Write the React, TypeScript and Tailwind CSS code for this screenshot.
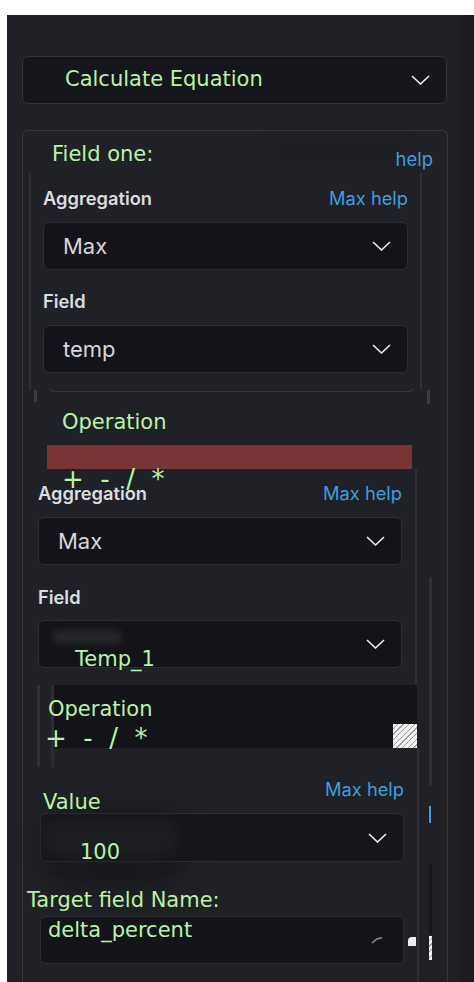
import React from "react";

const green = "text-[#b8f3a6]";
const dv = "font-['DejaVu_Sans',sans-serif]";
const inter = "font-['Inter',sans-serif]";

function Chevron({ small = false }: { small?: boolean }) {
  return small ? (
    <svg width="12" height="7" viewBox="0 0 12 7" className="opacity-60">
      <polyline points="1,6 6,2 11,0.5" fill="none" stroke="#e5e5e5" strokeWidth="1.4" />
    </svg>
  ) : (
    <svg width="19" height="10" viewBox="0 0 19 10">
      <polyline points="1,1 9.5,9 18,1" fill="none" stroke="#eeeeee" strokeWidth="1.6" />
    </svg>
  );
}

function Select({ text, className = "" }: { text?: string; className?: string }) {
  return (
    <div
      className={`flex h-[48px] items-center justify-between rounded-[6px] border border-[#2c2e34] bg-[#13141a] pl-[19px] pr-[16px] ${className}`}
    >
      <span className={`${inter} text-[22px] text-[#d6d7da]`}>{text}</span>
      <Chevron />
    </div>
  );
}

function LabelRow({ label, help = true }: { label: string; help?: boolean }) {
  return (
    <div className={`flex h-[20px] items-center justify-between ${inter}`}>
      <span className="text-[18.3px] font-semibold text-[#dcdde0]">{label}</span>
      {help && <span className="text-[18.3px] text-[#3d9fdc]">Max help</span>}
    </div>
  );
}

function Hatch({ className = "" }: { className?: string }) {
  return (
    <div
      className={`bg-[repeating-linear-gradient(135deg,#f2f2f2_0px,#f2f2f2_3px,#9c9c9c_3px,#9c9c9c_4px)] ${className}`}
    />
  );
}

function Ops({ className = "" }: { className?: string }) {
  return (
    <div className={`${dv} ${green} absolute whitespace-pre text-[26px] leading-[26px] ${className}`}>
      {"+  -  /  *"}
    </div>
  );
}

export default function App() {
  return (
    <div className="h-[982px] w-[474px] overflow-hidden bg-white pl-[7px] pt-[15px]">
      <div className="relative flex h-[967px] w-[467px] bg-[#202126]">
        <div className="w-[453px] pt-[41px]">
          {/* main dropdown */}
          <div className="ml-[15px] flex h-[48px] w-[425px] items-center justify-between rounded-[6px] border border-[#32343a] bg-[#15161b] pl-[42px] pr-[16px]">
            <span className={`${dv} ${green} text-[21px]`}>Calculate Equation</span>
            <Chevron />
          </div>

          {/* outer box */}
          <div className="relative ml-[15px] mt-[26px] h-[852px] w-[426px] rounded-t-[6px] border border-b-0 border-[#34363c]">
            {/* header */}
            <div className="relative flex h-[42px] items-center justify-between pl-[29px] pr-[14px]">
              <span className={`${dv} ${green} mt-[5px] text-[21px]`}>Field one:</span>
              <div className="absolute left-[250px] top-[12px] h-[18px] w-[130px] rounded-full bg-[#1c1d22] blur-[8px]" />
              <span className={`${inter} relative mt-[16px] text-[18.5px] text-[#3d9fdc]`}>help</span>
            </div>

            {/* first group */}
            <div className="relative ml-[6px] h-[217px] w-[393px] border-x-2 border-[#2e3036] pl-[12px] pr-[12px] pt-[16px]">
              <LabelRow label="Aggregation" />
              <Select text="Max" className="mt-[13px]" />
              <div className="mt-[22px]">
                <LabelRow label="Field" help={false} />
              </div>
              <Select text="temp" className="mt-[13px]" />
            </div>
            <div className="relative flex h-[12px] items-start">
              <div className="ml-[11px] h-[12px] w-[3px] bg-[#3a3c42]" />
              <div className="-mt-[2px] ml-[13px] h-[4px] w-[363px] rounded-b-[6px] border-x border-b border-[#34363c]" />
              <div className="ml-[14px] h-[14px] w-[3px] bg-[#3a3c42]" />
            </div>

            {/* operation */}
            <div className={`${dv} ${green} ml-[39px] mt-[8px] text-[21px] leading-[24px]`}>Operation</div>
            <div className="ml-[24px] mt-[11px] h-[24px] w-[365px] bg-[#7b3435]" />

            {/* second group */}
            <div className="relative ml-[2px] h-[216px] w-[392px] border-r-2 border-[#2e3036] pl-[13px] pr-[13px] pt-[15px]">
              <LabelRow label="Aggregation" />
              <Select text="Max" className="mt-[13px]" />
              <div className="mt-[23px]">
                <LabelRow label="Field" help={false} />
              </div>
              <div className="relative mt-[12px]">
                <Select text="" />
                <div className="absolute left-[14px] top-[10px] h-[14px] w-[70px] rounded-full bg-[#25272c] blur-[3px]" />
                <span className={`${dv} ${green} absolute left-[37px] top-[27px] text-[21px] leading-[24px]`}>Temp_1</span>
              </div>
              <Ops className="left-[37px] top-[-3px]" />
            </div>

            {/* dark operation block */}
            <div className="relative flex h-[63px]">
              <div className="ml-[14px] h-[82px] w-[3px] bg-[#2e3036]" />
              <div className="ml-[11px] h-[82px] w-[3px] bg-[#2a2c31]" />
              <div className="relative h-[63px] w-[363px] bg-[#131419]">
                <Hatch className="absolute bottom-0 right-0 h-[24px] w-[24px]" />
              </div>
              <div className={`${dv} ${green} absolute left-[25px] top-[12px] text-[21px] leading-[24px]`}>Operation</div>
              <Ops className="left-[22px] top-[40px]" />
            </div>

            {/* third group */}
            <div className="relative ml-[17px] h-[235px] w-[379px] border-r-2 border-[#2e3036] pr-[13px] pt-[30px]">
              <div className="absolute left-[0px] top-[60px] h-[80px] w-[150px] rounded-full bg-[#18191d] blur-[10px]" />
              <div className={`${inter} relative flex h-[24px] items-center justify-end text-[18.3px] text-[#3d9fdc]`}>
                Max help
              </div>
              <div className={`${dv} ${green} relative z-10 -mt-[12px] pl-[3px] text-[21px] leading-[24px]`}>Value</div>
              <div className="relative -mt-[1px]">
                <div className="flex h-[49px] items-center justify-end rounded-[6px] border border-[#2c2e34] bg-[#13141a]/80 pr-[16px]">
                  <Chevron />
                </div>
                <div className="absolute left-[0px] top-[5px] h-[40px] w-[140px] rounded-full bg-[#1d1e22] blur-[8px]" />
                <span className={`${dv} ${green} absolute left-[40px] top-[27px] text-[21px] leading-[24px]`}>100</span>
              </div>
              <div className={`${dv} ${green} relative -ml-[13px] mt-[26px] text-[21px] leading-[24px]`}>Target field Name:</div>
              <div className="relative mt-[4px] flex h-[48px] items-start justify-between rounded-[6px] border border-[#2c2e34] bg-[#13141a] pl-[7px] pr-[20px]">
                <span className={`${dv} ${green} mt-[1px] text-[21px] leading-[24px]`}>delta_percent</span>
                <div className="mt-[20px]">
                  <Chevron small />
                </div>
              </div>
            </div>

            {/* right side lines */}
            <div className="absolute left-[406px] top-[446px] h-[209px] w-[3px] rounded bg-[#2e3036]" />
            <div className="absolute left-[406px] top-[675px] h-[17px] w-[2px] bg-[#3d9fdc]" />
            <div className="absolute left-[406px] top-[732px] h-[72px] w-[3px] rounded bg-[#15161a]" />
            <Hatch className="absolute left-[406px] top-[805px] h-[24px] w-[3px]" />
            <div className="absolute left-[385px] top-[806px] h-[9px] w-[8px] rounded-tl-[4px] bg-[#eeeeee]" />
          </div>
        </div>
        <div className="h-full w-[14px] bg-[#1c1d21]" />
      </div>
    </div>
  );
}
